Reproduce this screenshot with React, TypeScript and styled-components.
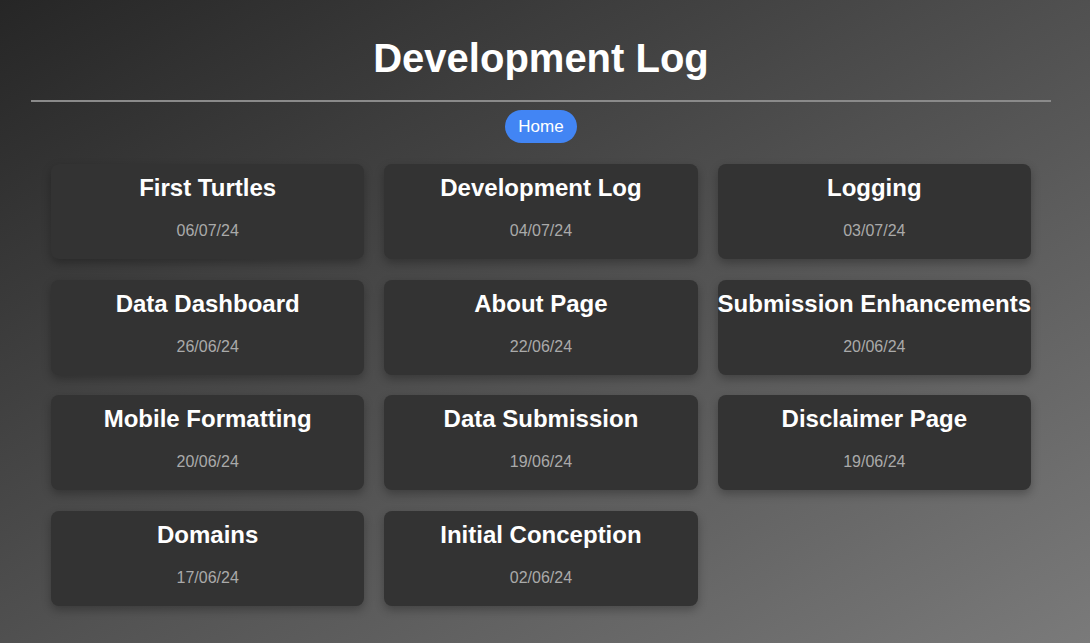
import React from "react";
import styled, { createGlobalStyle } from "styled-components";

const Global = createGlobalStyle`
  html, body { margin: 0; padding: 0; }
  body {
    min-height: 643px;
    background: linear-gradient(to bottom right, #262626 0%, #505050 50%, #7a7a7a 100%);
    font-family: "Liberation Sans", Arial, sans-serif;
    color: #fff;
  }
`;

const Page = styled.div`
  padding: 35px 39px 30px 31px;
  display: flex;
  flex-direction: column;
  align-items: stretch;
`;

const Title = styled.h1`
  margin: 0;
  font-size: 40px;
  line-height: 46px;
  font-weight: 700;
  text-align: center;
  color: #fff;
`;

const Rule = styled.hr`
  width: 100%;
  margin: 19px 0 0;
  border: none;
  height: 2px;
  background: #8a8a8a;
`;

const Nav = styled.nav`
  display: flex;
  justify-content: center;
  margin-top: 8px;
`;

const NavButton = styled.a`
  display: inline-block;
  background: #4285f4;
  color: #fff;
  font-size: 17px;
  line-height: 19px;
  padding: 7px 13px;
  border-radius: 17px;
  text-decoration: none;
`;

const Grid = styled.div`
  margin: 21px 20px 0;
  display: grid;
  grid-template-columns: repeat(3, 1fr);
  column-gap: 20px;
  row-gap: 20.5px;
`;

const Card = styled.div`
  background: #333333;
  border-radius: 8px;
  box-shadow: 0 4px 10px rgba(0, 0, 0, 0.28);
  height: 95px;
  box-sizing: border-box;
  padding-top: 10px;
  display: flex;
  flex-direction: column;
  align-items: center;
  text-align: center;
`;

const CardTitle = styled.h3`
  margin: 0;
  font-size: 24px;
  line-height: 28px;
  font-weight: 700;
  color: #fff;
  white-space: nowrap;
`;

const CardDate = styled.p`
  margin: 20px 0 0;
  font-size: 16px;
  line-height: 18px;
  color: #aaaaaa;
`;

const entries = [
  ["First Turtles", "06/07/24"],
  ["Development Log", "04/07/24"],
  ["Logging", "03/07/24"],
  ["Data Dashboard", "26/06/24"],
  ["About Page", "22/06/24"],
  ["Submission Enhancements", "20/06/24"],
  ["Mobile Formatting", "20/06/24"],
  ["Data Submission", "19/06/24"],
  ["Disclaimer Page", "19/06/24"],
  ["Domains", "17/06/24"],
  ["Initial Conception", "02/06/24"],
];

export default function App() {
  return (
    <>
      <Global />
      <Page>
        <Title>Development Log</Title>
        <Rule />
        <Nav>
          <NavButton href="#">Home</NavButton>
        </Nav>
        <Grid>
          {entries.map(([t, d]) => (
            <Card key={t}>
              <CardTitle>{t}</CardTitle>
              <CardDate>{d}</CardDate>
            </Card>
          ))}
        </Grid>
      </Page>
    </>
  );
}
